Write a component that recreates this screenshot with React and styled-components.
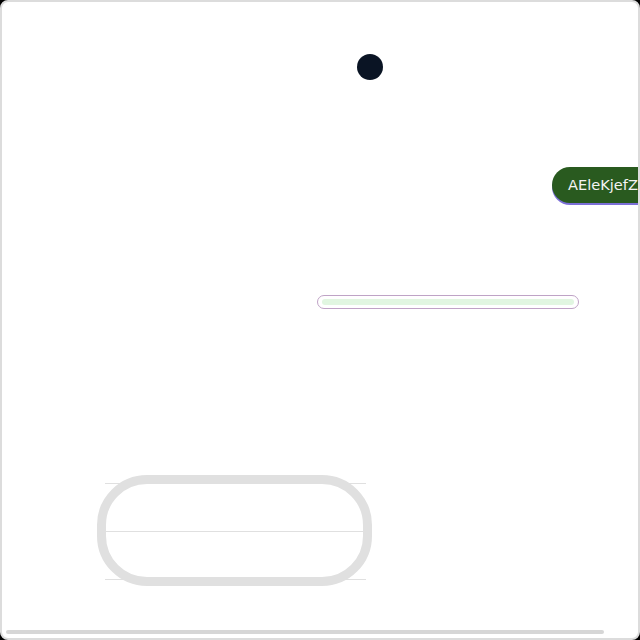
import React from 'react'
import styled, { createGlobalStyle } from 'styled-components'

const GlobalStyle = createGlobalStyle`
  html, body {
    margin: 0;
    padding: 0;
    background: #000;
  }
`

const Frame = styled.div`
  box-sizing: border-box;
  display: flex;
  flex-direction: column;
  align-items: flex-start;
  width: 640px;
  height: 640px;
  border: 2px solid #dcdcdc;
  border-radius: 8px;
  background: #fff;
  overflow: hidden;
`

const Dot = styled.div`
  flex-shrink: 0;
  width: 26px;
  height: 26px;
  margin: 52px 0 0 355px;
  border-radius: 50%;
  background: #0a1424;
`

const Pill = styled.div`
  flex-shrink: 0;
  box-sizing: border-box;
  height: 36px;
  margin: 87px 0 0 550px;
  padding: 0 18px 0 16px;
  border-radius: 18px;
  background: #295a1f;
  box-shadow: 0 2px 0 #7b6fd6;
  color: #f4f4f4;
  font-family: 'DejaVu Sans', sans-serif;
  font-size: 14.6px;
  line-height: 36px;
  white-space: nowrap;
`

const Progress = styled.div`
  flex-shrink: 0;
  box-sizing: border-box;
  width: 262px;
  height: 14px;
  margin: 92px 0 0 315px;
  padding: 3px 4px;
  border: 1px solid #bfa3c6;
  border-radius: 7px;
  background: #fff;
`

const Fill = styled.div`
  width: ${p => p.$value}%;
  height: 6px;
  border-radius: 3px;
  background: #e1f6e1;
`

const Card = styled.div`
  flex-shrink: 0;
  box-sizing: border-box;
  width: 275px;
  height: 111px;
  margin: 166px 0 0 95px;
  border: 9px solid #e0e0e0;
  border-radius: 50px;
  background: #fff;
`

const Table = styled.div`
  display: flex;
  flex-direction: column;
  margin: -1px -3px 0 -1px;
  border-top: 1px solid #e0e0e0;
  border-bottom: 1px solid #e0e0e0;
`

const Row = styled.div`
  height: 47px;
  & + & {
    border-top: 1px solid #e0e0e0;
  }
`

const Scrollbar = styled.div`
  flex-shrink: 0;
  width: 598px;
  height: 4px;
  margin: 44px 0 0 4px;
  border-radius: 2px;
  background: #d6d6d6;
`

export default function App() {
  return (
    <>
      <GlobalStyle />
      <Frame>
        <Dot />
        <Pill>AEleKjefZ</Pill>
        <Progress>
          <Fill $value={100} />
        </Progress>
        <Card>
          <Table>
            <Row />
            <Row />
          </Table>
        </Card>
        <Scrollbar />
      </Frame>
    </>
  )
}
